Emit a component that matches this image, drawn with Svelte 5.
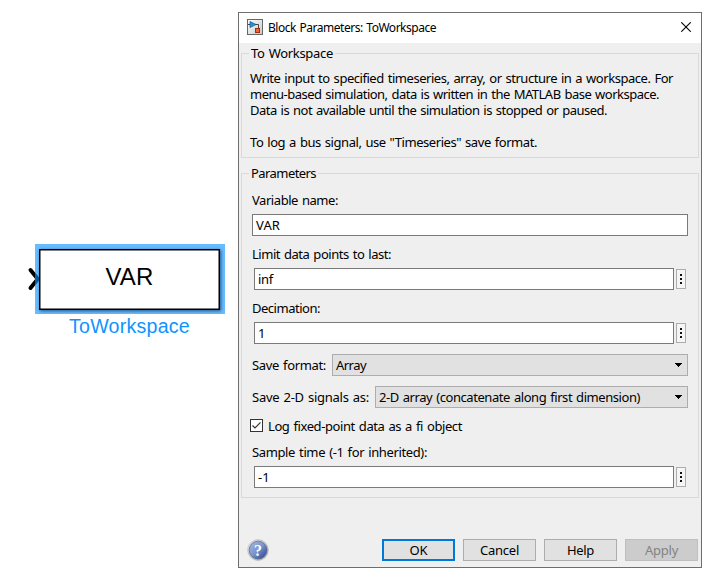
<script>
  const description = [
    ['Write input to specified timeseries, array, or structure in a workspace. For', 423],
    ['menu-based simulation, data is written in the MATLAB base workspace.', 409],
    ['Data is not available until the simulation is stopped or paused.', 357],
    ['', 0],
    ['To log a bus signal, use "Timeseries" save format.', 287]
  ];
  const buttons = [
    { label: 'OK', width: 18, kind: 'primary' },
    { label: 'Cancel', width: 39, kind: '' },
    { label: 'Help', width: 27, kind: '' },
    { label: 'Apply', width: 33, kind: 'disabled' }
  ];

  // Spreads the letters of a label so that it occupies the given width.
  function fit(node, width) {
    const natural = node.getBoundingClientRect().width;
    const count = node.textContent.length;
    if (count && width) node.style.letterSpacing = `${(width - natural) / count}px`;
  }
</script>

{#snippet text(value, width)}<span class="text" use:fit={width}>{value}</span>{/snippet}

{#snippet editRow(value, width)}
  <div class="edit-row">
    <div class="input">{@render text(value, width)}</div>
    <div class="more"><i></i><i></i><i></i></div>
  </div>
{/snippet}

{#snippet combo(value, width)}
  <div class="combo">
    {@render text(value, width)}
    <svg width="7" height="4" viewBox="0 0 7 4" shape-rendering="crispEdges"><path d="M0 0h7v1h-1v1h-1v1h-1v1h-1v-1h-1v-1h-1v-1h-1z" /></svg>
  </div>
{/snippet}

<div class="screen">
  <div class="canvas">
    <svg class="port" width="16" height="28" viewBox="0 0 16 28"><path d="M3.5 5L10.8 14L3.5 23" fill="none" stroke="#000" stroke-width="4" stroke-linecap="round" /></svg>
    <div class="halo"><div class="block">{@render text('VAR', 48)}</div></div>
    <div class="block-name">{@render text('ToWorkspace', 121)}</div>
  </div>

  <div class="dialog">
    <div class="titlebar">
      <svg class="app-icon" width="16" height="16" viewBox="0 0 16 16">
        <defs><linearGradient id="tile" x1="0" y1="0" x2="1" y2="1"><stop offset="0" stop-color="#fff" /><stop offset="1" stop-color="#c8c8c8" /></linearGradient></defs>
        <rect x=".5" y=".5" width="15" height="15" fill="url(#tile)" stroke="#666" />
        <path d="M1 5.5h2M8 5.5h3.5v4" fill="none" stroke="#444" />
        <path d="M3 2.5v6l6-3z" fill="#2f91cf" stroke="#17619c" stroke-width=".8" />
        <rect x="8.5" y="9.5" width="4" height="4" fill="#e96a38" stroke="#a82c0a" />
      </svg>
      <span class="title">{@render text('Block Parameters: ToWorkspace', 168)}</span>
      <svg class="close" width="10" height="10" viewBox="0 0 10 10"><path d="M.3.3l9.4 9.4M9.7.3L.3 9.7" stroke="#000" stroke-width="1.1" /></svg>
    </div>

    <div class="group about">
      <span class="legend">{@render text('To Workspace', 82)}</span>
      {#each description as [line, width]}
        <div class="line">{@render text(line, width)}</div>
      {/each}
    </div>

    <div class="group params">
      <span class="legend">{@render text('Parameters', 65)}</span>
      <div class="label first">{@render text('Variable name:', 86)}</div>
      <div class="input wide">{@render text('VAR', 24)}</div>
      <div class="label">{@render text('Limit data points to last:', 139)}</div>
      {@render editRow('inf', 15)}
      <div class="label">{@render text('Decimation:', 68)}</div>
      {@render editRow('1', 8)}
      <div class="combo-row">{@render text('Save format:', 74)}<span class="gap"></span>{@render combo('Array', 30)}</div>
      <div class="combo-row">{@render text('Save 2-D signals as:', 117)}<span class="gap"></span>{@render combo('2-D array (concatenate along first dimension)', 261)}</div>
      <div class="check-row">
        <svg width="13" height="13" viewBox="0 0 13 13"><rect x=".5" y=".5" width="12" height="12" fill="#fff" stroke="#333" /><path d="M2.5 6.5L5 9L10.5 3.3" fill="none" stroke="#333" stroke-width="1.2" /></svg>
        {@render text('Log fixed-point data as a fi object', 194)}
      </div>
      <div class="label last">{@render text('Sample time (-1 for inherited):', 175)}</div>
      {@render editRow('-1', 12)}
    </div>

    <div class="footer">
      <svg class="help" width="22" height="22" viewBox="0 0 22 22">
        <defs>
          <linearGradient id="ring" x1="0" y1="0" x2="1" y2="1"><stop offset="0" stop-color="#eee" /><stop offset="1" stop-color="#8c8c8c" /></linearGradient>
          <linearGradient id="ball" x1="0" y1="0" x2="1" y2="1"><stop offset="0" stop-color="#a9bbe0" /><stop offset=".5" stop-color="#7b94cd" /><stop offset="1" stop-color="#203c8c" /></linearGradient>
        </defs>
        <circle cx="11" cy="11" r="10.4" fill="url(#ring)" stroke="#bbb" stroke-width=".6" />
        <circle cx="11" cy="11" r="8.8" fill="url(#ball)" stroke="#465a96" stroke-width=".6" />
        <text x="11" y="16.5" text-anchor="middle" font-family="Liberation Serif, serif" font-weight="bold" font-size="16" fill="#fff">?</text>
      </svg>
      <div class="buttons">
        {#each buttons as b}
          <div class="button {b.kind}">{@render text(b.label, b.width)}</div>
        {/each}
      </div>
    </div>
  </div>
</div>

<style>
  .screen {
    width: 718px;
    height: 582px;
    background: #fff;
    display: flex;
    overflow: hidden;
    box-sizing: border-box;
    font: 13px/16px "Noto Sans", "Open Sans", sans-serif;
    word-spacing: 1px;
    color: #000;
  }
  .screen :global(*) { box-sizing: border-box; }
  svg { display: block; flex: none; }
  .text { display: inline-block; white-space: pre; flex: none; }

  .canvas {
    width: 238px;
    padding: 244px 0 0 35px;
    flex: none;
    position: relative;
    font-family: "Liberation Sans", Arial, sans-serif;
  }
  .port { position: absolute; left: 27px; top: 265px; }
  .halo {
    position: relative;
    width: 190px;
    height: 70px;
    padding: 5px 4px 4px;
    background: rgba(10, 148, 255, .62);
  }
  .block {
    width: 181px;
    height: 61px;
    border: 1px solid #000;
    background: #fff;
    display: flex;
    align-items: center;
    justify-content: center;
    font-size: 24px;
    line-height: 28px;
    padding-bottom: 5px;
    box-shadow: inset 0 0 0 .5px #000, 1px 1px 3px rgba(0, 40, 80, .7);
  }
  .block-name {
    width: 189px;
    padding-top: 1px;
    display: flex;
    justify-content: center;
    font-size: 19.6px;
    line-height: 23px;
    color: #0d94ff;
  }

  .dialog {
    width: 464px;
    height: 556px;
    margin-top: 12px;
    flex: none;
    border: 1px solid #6e6e6e;
    background: #efefef;
    display: flex;
    flex-direction: column;
  }
  .titlebar {
    height: 30px;
    flex: none;
    background: #fff;
    display: flex;
    align-items: center;
    padding: 0 10px 0 8px;
  }
  .app-icon { margin-top: -2px; }
  .title { font-size: 12px; margin: -1px auto 0 5px; }
  .close { margin-top: -2px; }

  .group {
    position: relative;
    width: 458px;
    margin-left: 2px;
    border: 1px solid #d9d9d9;
    flex: none;
  }
  .about { margin-top: 10px; height: 105px; padding: 16px 0 0 8px; }
  .params { margin-top: 15px; height: 325px; padding: 0 10px; }
  .legend {
    position: absolute;
    left: 7px;
    top: -9px;
    height: 16px;
    padding: 0 2px;
    background: #efefef;
  }
  .line { height: 16px; }
  .label { height: 32px; padding: 10px 0 0; }
  .label.first { height: 40px; padding-top: 18px; }
  .input {
    height: 22px;
    background: #fff;
    border: 1px solid #7a7a7a;
    padding: 2px 0 0 3px;
    flex: 1;
  }
  .wide { width: 436px; }
  .edit-row { display: flex; align-items: center; padding-left: 2px; width: 434px; gap: 2px; }
  .more {
    width: 10px;
    height: 20px;
    background: #f5f5f5;
    border: 1px solid #adadad;
    display: flex;
    flex-direction: column;
    align-items: center;
    padding-top: 4px;
    gap: 2px;
  }
  .more i { width: 2px; height: 2px; background: #111; flex: none; }
  .combo-row { display: flex; align-items: center; width: 436px; margin-top: 10px; }
  .gap { width: 6px; flex: none; }
  .combo {
    flex: 1;
    height: 22px;
    background: #e1e1e1;
    border: 1px solid #adadad;
    display: flex;
    align-items: center;
    justify-content: space-between;
    padding: 0 5px 0 3px;
  }
  .check-row { display: flex; align-items: center; gap: 5px; margin: 9px 0 0 -2px; height: 17px; }

  .footer {
    display: flex;
    justify-content: space-between;
    margin-top: 41px;
    padding: 0 3px 0 8px;
  }
  .buttons { display: flex; gap: 8px; }
  .button {
    width: 73px;
    height: 22px;
    background: #e1e1e1;
    border: 1px solid #adadad;
    display: flex;
    align-items: center;
    justify-content: center;
  }
  .primary { border: 2px solid #0078d7; }
  .disabled { background: #ccc; border-color: #bfbfbf; color: #838383; }
</style>
